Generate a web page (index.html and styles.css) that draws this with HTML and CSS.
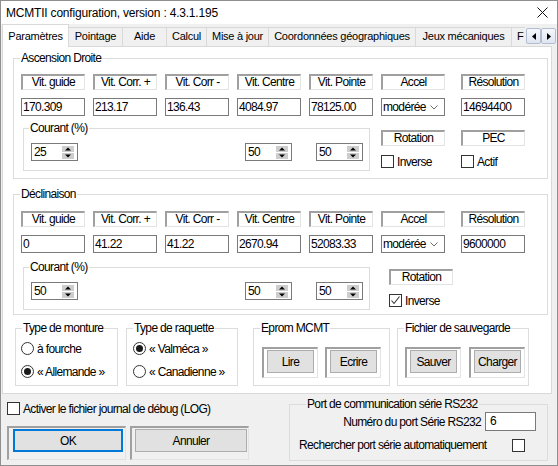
FILE: index.html
```html
<!DOCTYPE html>
<html lang="fr">
<head>
<meta charset="utf-8">
<title>MCMTII configuration</title>
<link rel="stylesheet" href="styles.css">
</head>
<body>
<div class="window">
  <header class="titlebar">
    <span class="title">MCMTII configuration, version : 4.3.1.195</span>
    <span class="close"><svg width="11" height="11" viewBox="0 0 11 11"><path d="M0.5 0.5 L10.5 10.5 M10.5 0.5 L0.5 10.5" stroke="#111" stroke-width="1"/></svg></span>
  </header>

  <nav class="tabstrip">
    <div class="tablist">
      <div class="tab active t1">Paramètres</div>
      <div class="tab t2">Pointage</div>
      <div class="tab t3">Aide</div>
      <div class="tab t4">Calcul</div>
      <div class="tab t5">Mise à jour</div>
      <div class="tab t6">Coordonnées géographiques</div>
      <div class="tab t7">Jeux mécaniques</div>
      <div class="tab t8">F</div>
    </div>
    <div class="tabscroll">
      <span class="tsb"><svg width="4" height="7" viewBox="0 0 4 7"><path d="M4 0 L0 3.5 L4 7Z" fill="#000"/></svg></span>
      <span class="tsb"><svg width="4" height="7" viewBox="0 0 4 7"><path d="M0 0 L4 3.5 L0 7Z" fill="#000"/></svg></span>
    </div>
  </nav>

  <main class="page">
    <section class="group axis">
      <span class="gtitle">Ascension Droite</span>
      <div class="row">
        <div class="lbl">Vit. guide</div>
        <div class="lbl">Vit. Corr. +</div>
        <div class="lbl">Vit. Corr -</div>
        <div class="lbl">Vit. Centre</div>
        <div class="lbl">Vit. Pointe</div>
        <div class="lbl">Accel</div>
        <div class="lbl wide">Résolution</div>
      </div>
      <div class="row inputs">
        <div class="field">170.309</div>
        <div class="field">213.17</div>
        <div class="field">136.43</div>
        <div class="field">4084.97</div>
        <div class="field">78125.00</div>
        <div class="field combo"><span>modérée</span><svg width="8" height="5" viewBox="0 0 8 5"><path d="M0.5 0.5 L4 4 L7.5 0.5" fill="none" stroke="#6d6d6d" stroke-width="1"/></svg></div>
        <div class="field wide">14694400</div>
      </div>
      <div class="row3">
        <div class="group courant">
          <span class="gtitle">Courant (%)</span>
          <div class="spin"><span>25</span><svg width="12" height="13" viewBox="0 0 12 13"><rect x="0" y="0" width="12" height="6" fill="#cdcdcd"/><rect x="0" y="7" width="12" height="6" fill="#cdcdcd"/><path d="M3 4.5 L6 1.5 L9 4.5Z" fill="#000"/><path d="M3 8.5 L6 11.5 L9 8.5Z" fill="#000"/></svg></div>
          <div class="spin s2"><span>50</span><svg width="12" height="13" viewBox="0 0 12 13"><rect x="0" y="0" width="12" height="6" fill="#cdcdcd"/><rect x="0" y="7" width="12" height="6" fill="#cdcdcd"/><path d="M3 4.5 L6 1.5 L9 4.5Z" fill="#000"/><path d="M3 8.5 L6 11.5 L9 8.5Z" fill="#000"/></svg></div>
          <div class="spin s3"><span>50</span><svg width="12" height="13" viewBox="0 0 12 13"><rect x="0" y="0" width="12" height="6" fill="#cdcdcd"/><rect x="0" y="7" width="12" height="6" fill="#cdcdcd"/><path d="M3 4.5 L6 1.5 L9 4.5Z" fill="#000"/><path d="M3 8.5 L6 11.5 L9 8.5Z" fill="#000"/></svg></div>
        </div>
        <div class="rotcol">
          <div class="lbl">Rotation</div>
          <div class="check"><span class="cb"></span><span>Inverse</span></div>
        </div>
        <div class="rotcol pec">
          <div class="lbl">PEC</div>
          <div class="check"><span class="cb"></span><span>Actif</span></div>
        </div>
      </div>
    </section>

    <section class="group axis decl">
      <span class="gtitle">Déclinaison</span>
      <div class="row">
        <div class="lbl">Vit. guide</div>
        <div class="lbl">Vit. Corr. +</div>
        <div class="lbl">Vit. Corr -</div>
        <div class="lbl">Vit. Centre</div>
        <div class="lbl">Vit. Pointe</div>
        <div class="lbl">Accel</div>
        <div class="lbl wide">Résolution</div>
      </div>
      <div class="row inputs">
        <div class="field">0</div>
        <div class="field">41.22</div>
        <div class="field">41.22</div>
        <div class="field">2670.94</div>
        <div class="field">52083.33</div>
        <div class="field combo"><span>modérée</span><svg width="8" height="5" viewBox="0 0 8 5"><path d="M0.5 0.5 L4 4 L7.5 0.5" fill="none" stroke="#6d6d6d" stroke-width="1"/></svg></div>
        <div class="field wide">9600000</div>
      </div>
      <div class="row3">
        <div class="group courant">
          <span class="gtitle">Courant (%)</span>
          <div class="spin"><span>50</span><svg width="12" height="13" viewBox="0 0 12 13"><rect x="0" y="0" width="12" height="6" fill="#cdcdcd"/><rect x="0" y="7" width="12" height="6" fill="#cdcdcd"/><path d="M3 4.5 L6 1.5 L9 4.5Z" fill="#000"/><path d="M3 8.5 L6 11.5 L9 8.5Z" fill="#000"/></svg></div>
          <div class="spin s2"><span>50</span><svg width="12" height="13" viewBox="0 0 12 13"><rect x="0" y="0" width="12" height="6" fill="#cdcdcd"/><rect x="0" y="7" width="12" height="6" fill="#cdcdcd"/><path d="M3 4.5 L6 1.5 L9 4.5Z" fill="#000"/><path d="M3 8.5 L6 11.5 L9 8.5Z" fill="#000"/></svg></div>
          <div class="spin s3"><span>50</span><svg width="12" height="13" viewBox="0 0 12 13"><rect x="0" y="0" width="12" height="6" fill="#cdcdcd"/><rect x="0" y="7" width="12" height="6" fill="#cdcdcd"/><path d="M3 4.5 L6 1.5 L9 4.5Z" fill="#000"/><path d="M3 8.5 L6 11.5 L9 8.5Z" fill="#000"/></svg></div>
        </div>
        <div class="rotcol">
          <div class="lbl">Rotation</div>
          <div class="check"><span class="cb"><svg width="11" height="11" viewBox="0 0 11 11"><path d="M1.5 5.5 L4 8.5 L9.5 1.5" fill="none" stroke="#333" stroke-width="1.1"/></svg></span><span>Inverse</span></div>
        </div>
      </div>
    </section>

    <div class="lower">
      <section class="group monture">
        <span class="gtitle">Type de monture</span>
        <div class="radio-row"><span class="radio"></span><span>à fourche</span></div>
        <div class="radio-row"><span class="radio on"></span><span>« Allemande »</span></div>
      </section>
      <section class="group raquette">
        <span class="gtitle">Type de raquette</span>
        <div class="radio-row"><span class="radio on"></span><span>« Valméca »</span></div>
        <div class="radio-row"><span class="radio"></span><span>« Canadienne »</span></div>
      </section>
      <section class="group eprom">
        <span class="gtitle">Eprom MCMT</span>
        <div class="sunk btnframe"><div class="btn small">Lire</div></div>
        <div class="sunk btnframe"><div class="btn small">Ecrire</div></div>
      </section>
      <section class="group fichier">
        <span class="gtitle">Fichier de sauvegarde</span>
        <div class="sunk btnframe"><div class="btn small">Sauver</div></div>
        <div class="sunk btnframe"><div class="btn small">Charger</div></div>
      </section>
    </div>
  </main>

  <footer class="bottom">
    <div class="leftcol">
      <div class="logrow"><span class="cb"></span><span>Activer le fichier journal de débug (LOG)</span></div>
      <div class="btnrow">
        <div class="sunk bigframe ok"><div class="btn default">OK</div></div>
        <div class="sunk bigframe cancel"><div class="btn">Annuler</div></div>
      </div>
    </div>
    <section class="group port">
      <span class="gtitle">Port de communication série RS232</span>
      <div class="portrow"><span>Numéro du port Série RS232</span><div class="portin">6</div></div>
      <div class="portrow2"><span>Rechercher port série automatiquement</span><span class="cb"></span></div>
    </section>
  </footer>
</div>
</body>
</html>
```
FILE: styles.css
```css
* { box-sizing: border-box; }
html, body { margin: 0; padding: 0; }
body {
  font-family: "Liberation Sans", Arial, sans-serif;
  font-size: 12px;
  letter-spacing: -0.65px;
  color: #000;
  background: #f0f0f0;
}
.window {
  width: 558px;
  height: 466px;
  border: 1px solid #8f8f8f;
  background: #f0f0f0;
  display: flex;
  flex-direction: column;
  overflow: hidden;
}

/* title bar */
.titlebar {
  flex: none;
  height: 23px;
  background: #fff;
  display: flex;
  align-items: center;
  justify-content: space-between;
  padding-left: 5px;
}
.title { letter-spacing: -0.2px; }
.close { width: 30px; height: 23px; display: flex; align-items: center; justify-content: center; }

/* tabs */
.tabstrip { flex: none; height: 22px; display: flex; align-items: flex-end; padding-left: 1px; }
.tablist { display: flex; align-items: flex-end; height: 22px; }
.tab {
  flex: none;
  height: 19px;
  margin-left: -1px;
  border: 1px solid #d9d9d9;
  border-bottom: 0;
  background: #f0f0f0;
  font-size: 11px;
  letter-spacing: -0.25px;
  line-height: 17px;
  text-align: center;
  white-space: nowrap;
}
.tab.active {
  position: relative;
  z-index: 1;
  height: 23px;
  margin-bottom: -1px;
  background: #fff;
  line-height: 22px;
}
.t1 { width: 67px; margin-left: 0; }
.t2 { width: 55px; }
.t3 { width: 45px; }
.t4 { width: 41px; }
.t5 { width: 63px; }
.t6 { width: 148px; }
.t7 { width: 97px; }
.t8 { width: 14px; border-right: 0; text-align: left; padding-left: 5px; overflow: hidden; }
.tabscroll { display: flex; margin: 0 0 2px 1px; }
.tsb {
  width: 15px;
  height: 16px;
  border: 1px solid #b3bdd2;
  border-radius: 2px;
  background: linear-gradient(#f5f7fc, #dfe5f1);
  display: flex;
  align-items: center;
  justify-content: center;
}

/* page */
.page {
  flex: none;
  margin-left: 1px;
  width: 550px;
  height: 348px;
  background: #fff;
  border: 1px solid #d9d9d9;
}

/* groups */
.group { position: relative; border: 1px solid #dcdcdc; }
.gtitle {
  position: absolute;
  top: -8px;
  left: 6px;
  padding: 0 1px;
  background: #fff;
  line-height: 14px;
  white-space: nowrap;
}
.axis { margin: 11px 0 0 10px; width: 535px; height: 121px; padding: 15px 0 0 7px; }
.axis.decl { margin-top: 15px; padding-top: 16px; }

.row { display: flex; gap: 8px; }
.lbl {
  width: 64px;
  height: 16px;
  border-top: 2px solid #a0a0a0;
  border-left: 2px solid #a0a0a0;
  border-right: 1px solid #e3e3e3;
  border-bottom: 1px solid #e3e3e3;
  text-align: center;
  line-height: 13px;
  white-space: nowrap;
}
.wide { margin-left: 8px; }
.inputs { margin-top: 8px; }
.field {
  width: 64px;
  height: 18px;
  border: 1px solid #7a7a7a;
  background: #fff;
  padding-left: 1px;
  line-height: 16px;
  white-space: nowrap;
}
.combo { display: flex; justify-content: space-between; align-items: center; padding-right: 6px; }

.row3 { display: flex; align-items: flex-start; margin-top: 12px; }
.axis.decl .row3 { margin-top: 14px; }
.courant { margin-left: 2px; width: 347px; height: 43px; padding: 14px 6px 0 7px; display: flex; }
.courant .gtitle { left: 5px; }
.spin {
  width: 47px;
  height: 18px;
  border: 1px solid #7a7a7a;
  background: #fff;
  display: flex;
  align-items: center;
  justify-content: space-between;
  padding: 0 3px 0 2px;
}
.spin.s2 { margin-left: auto; }
.spin.s3 { margin-left: 24px; }
.rotcol { width: 64px; margin: 2px 0 0 11px; }
.rotcol.pec { margin-left: 16px; }
.axis.decl .rotcol { margin-left: 19px; }
.check { display: flex; align-items: center; gap: 3px; height: 13px; margin-top: 9px; }
.cb {
  flex: none;
  width: 13px;
  height: 13px;
  border: 1px solid #333;
  background: #fff;
  display: flex;
  align-items: center;
  justify-content: center;
}

/* lower groups */
.lower { display: flex; align-items: flex-start; margin: 13px 0 0 12px; }
.lower .group { height: 58px; }
.monture { width: 103px; padding: 13px 0 0 5px; }
.raquette { width: 112px; margin-left: 8px; padding: 13px 0 0 6px; }
.eprom { width: 137px; margin-left: 15px; padding: 18px 0 0 8px; display: flex; gap: 7px; }
.fichier { width: 132px; margin-left: 7px; padding: 18px 0 0 7px; display: flex; gap: 8px; }
.radio-row { display: flex; align-items: center; gap: 3px; height: 13px; white-space: nowrap; }
.radio-row + .radio-row { margin-top: 10px; }
.radio {
  flex: none;
  width: 13px;
  height: 13px;
  border: 1px solid #333;
  border-radius: 50%;
  background: #fff;
  display: flex;
  align-items: center;
  justify-content: center;
}
.radio.on::after { content: ""; width: 7px; height: 7px; border-radius: 50%; background: #1a1a1a; }

.sunk {
  border-top: 2px solid #a0a0a0;
  border-left: 2px solid #a0a0a0;
  border-right: 1px solid #e3e3e3;
  border-bottom: 1px solid #e3e3e3;
}
.btnframe { width: 56px; height: 31px; padding: 1px 0 0 3px; }
.btn {
  height: 23px;
  background: #e1e1e1;
  border: 1px solid #adadad;
  display: flex;
  align-items: center;
  justify-content: center;
  white-space: nowrap;
}
.btn.small { width: 47px; }
.btn.default { border: 2px solid #0078d7; }

/* bottom */
.bottom { flex: 1; display: flex; align-items: flex-start; padding-left: 6px; }
.leftcol { width: 245px; }
.logrow { display: flex; align-items: center; gap: 3px; margin-top: 8px; height: 13px; white-space: nowrap; }
.btnrow { display: flex; gap: 4px; margin-top: 11px; }
.bigframe { width: 119px; height: 34px; padding-top: 1px; }
.ok { padding-left: 4px; }
.ok .btn { width: 110px; }
.cancel { padding-left: 3px; }
.cancel .btn { width: 112px; }
.port {
  margin: 10px 9px 0 auto;
  width: 259px;
  height: 57px;
  padding: 7px 11px 0 9px;
}
.port .gtitle { left: 16px; background: #f0f0f0; }
.portrow { display: flex; justify-content: flex-end; align-items: center; gap: 4px; white-space: nowrap; }
.portin {
  width: 51px;
  height: 19px;
  border: 1px solid #7a7a7a;
  background: #fff;
  padding-left: 4px;
  line-height: 17px;
}
.portrow2 { display: flex; align-items: center; justify-content: space-between; margin-top: 7px; padding-right: 11px; white-space: nowrap; }
```
